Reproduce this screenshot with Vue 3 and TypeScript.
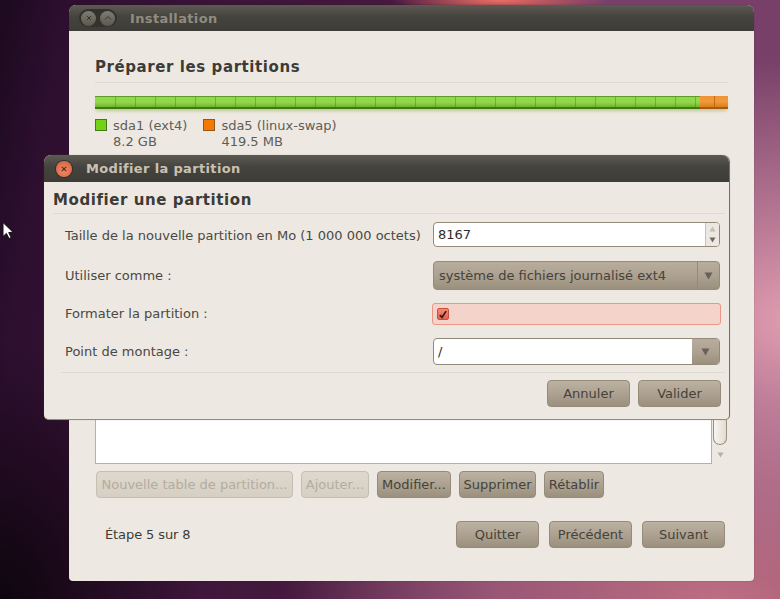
<script setup lang="ts">
const ticks: number[] = Array.from({ length: 31 }, (_, i) => i);
const treeButtons = [
  { label: 'Nouvelle table de partition...', width: 197, disabled: true },
  { label: 'Ajouter...', width: 68, disabled: true },
  { label: 'Modifier...', width: 74, disabled: false },
  { label: 'Supprimer', width: 77, disabled: false },
  { label: 'Rétablir', width: 60, disabled: false },
];
</script>

<template>
  <div class="desktop">
    <svg class="cursor" width="13" height="20" viewBox="0 0 13 20">
      <path d="M2 1.5 L2 15.5 L5.4 12.4 L8 17.6 L10.2 16.5 L7.7 11.6 L12 11.2 Z" fill="#fff" stroke="#111" stroke-width="1" />
    </svg>

    <section class="win install">
      <header class="titlebar">
        <div class="pill">
          <span class="pill-btn">
            <svg width="8" height="8" viewBox="0 0 8 8"><path d="M2 2 L6 6 M6 2 L2 6" stroke="#35342f" stroke-width="1" /></svg>
          </span>
          <span class="pill-btn">
            <svg width="8" height="8" viewBox="0 0 8 8"><path d="M1 5.5 L4 2.5 L7 5.5" stroke="#35342f" stroke-width="1" fill="none" /></svg>
          </span>
        </div>
        <span class="title dim">Installation</span>
      </header>

      <div class="install-body">
        <h1 class="heading">Préparer les partitions</h1>
        <div class="rule"></div>

        <div class="bar">
          <div class="bar-green">
            <i v-for="t in ticks" :key="t" class="tick"></i>
          </div>
          <div class="bar-orange"><i class="tick-o"></i></div>
        </div>

        <div class="legend">
          <div class="legend-item">
            <span class="swatch green"></span>
            <div class="legend-text"><div>sda1 (ext4)</div><div>8.2 GB</div></div>
          </div>
          <div class="legend-item">
            <span class="swatch orange"></span>
            <div class="legend-text"><div>sda5 (linux-swap)</div><div>419.5 MB</div></div>
          </div>
        </div>

        <div class="tree-row">
          <div class="tree"></div>
          <div class="scroll">
            <div class="thumb"></div>
            <svg class="scroll-arrow" width="7" height="6" viewBox="0 0 7 6"><path d="M0.5 0.5 L6.5 0.5 L3.5 5.5 Z" fill="#b5b0a5" /></svg>
          </div>
        </div>

        <div class="tree-buttons">
          <button
            v-for="b in treeButtons"
            :key="b.label"
            class="btn tight"
            :class="{ off: b.disabled }"
            :style="{ width: b.width + 'px' }"
          >{{ b.label }}</button>
        </div>

        <footer class="footer">
          <span class="step">Étape 5 sur 8</span>
          <div class="footer-buttons">
            <button class="btn wide">Quitter</button>
            <button class="btn wide">Précédent</button>
            <button class="btn wide">Suivant</button>
          </div>
        </footer>
      </div>
    </section>

    <section class="win dialog">
      <header class="titlebar dlg-bar">
        <span class="close">
          <svg width="8" height="8" viewBox="0 0 8 8"><path d="M1.8 1.8 L6.2 6.2 M6.2 1.8 L1.8 6.2" stroke="#5a2a1c" stroke-width="1.2" /></svg>
        </span>
        <span class="title">Modifier la partition</span>
      </header>

      <div class="dialog-body">
        <h2 class="heading small">Modifier une partition</h2>
        <div class="rule dlg-rule"></div>

        <div class="form">
          <label class="f-label">Taille de la nouvelle partition en Mo (1 000 000 octets)</label>
          <div class="spin">
            <span class="spin-value">8167</span>
            <span class="spin-btns">
              <svg width="7" height="6" viewBox="0 0 7 6"><path d="M3.5 0.5 L6.5 5.5 L0.5 5.5 Z" fill="#c4bfb3" /></svg>
              <svg width="7" height="6" viewBox="0 0 7 6"><path d="M0.5 0.5 L6.5 0.5 L3.5 5.5 Z" fill="#6f6a5f" /></svg>
            </span>
          </div>

          <label class="f-label">Utiliser comme :</label>
          <div class="combo">
            <span class="combo-value">système de fichiers journalisé ext4</span>
            <span class="combo-arrow">
              <svg width="9" height="8" viewBox="0 0 9 8"><path d="M0.5 0.5 L8.5 0.5 L4.5 7.5 Z" fill="#66615a" /></svg>
            </span>
          </div>

          <label class="f-label raised">Formater la partition :</label>
          <div class="check-row">
            <span class="check">
              <svg width="11" height="11" viewBox="0 0 11 11"><path d="M2 6 L4.4 8.6 L9 1.8" stroke="#2d1a16" stroke-width="1.8" fill="none" /></svg>
            </span>
          </div>

          <label class="f-label">Point de montage :</label>
          <div class="entry-combo">
            <span class="entry-value">/</span>
            <span class="entry-arrow">
              <svg width="9" height="8" viewBox="0 0 9 8"><path d="M0.5 0.5 L8.5 0.5 L4.5 7.5 Z" fill="#66615a" /></svg>
            </span>
          </div>
        </div>

        <div class="rule dlg-rule2"></div>
        <div class="dlg-actions">
          <button class="btn wide">Annuler</button>
          <button class="btn wide">Valider</button>
        </div>
      </div>
    </section>
  </div>
</template>

<style>
html, body { margin: 0; background: #fff; }
</style>

<style scoped>
.desktop {
  position: relative;
  width: 780px;
  height: 599px;
  overflow: hidden;
  font-family: "DejaVu Sans", sans-serif;
  font-size: 13px;
  color: #3c3b37;
  background:
    radial-gradient(ellipse 110px 14px at 500px 0, #ef6f62 0%, rgba(239, 111, 98, 0) 100%),
    radial-gradient(ellipse 300px 260px at 790px 320px, #e09cb0 0%, rgba(224, 156, 176, 0) 100%),
    radial-gradient(ellipse 440px 200px at 720px 600px, #bd6e82 0%, rgba(189, 110, 130, 0) 100%),
    radial-gradient(ellipse 200px 260px at 0 600px, #0e050e 0%, rgba(14, 5, 14, 0) 100%),
    linear-gradient(100deg, #1c0a1e 0%, #2e0f30 8%, #3a1438 25%, #45193f 45%, #76406a 68%, #7a4068 100%);
}

.cursor { position: absolute; left: 1px; top: 221px; }

.win {
  position: absolute;
  background: #ede9e2;
  box-sizing: border-box;
  display: flex;
  flex-direction: column;
}

.install {
  left: 69px;
  top: 5px;
  width: 685px;
  height: 576px;
  border-radius: 7px 7px 4px 4px;
  box-shadow: 0 0 1px rgba(0, 0, 0, 0.5);
}

.dialog {
  left: 44px;
  top: 155px;
  width: 686px;
  height: 265px;
  border-radius: 7px 7px 5px 5px;
  border-right: 1px solid #77705f;
  border-bottom: 1px solid #928b7b;
  box-shadow: 0 0 1px rgba(120, 110, 90, 0.6);
}

.titlebar {
  flex: none;
  height: 26px;
  display: flex;
  align-items: center;
  background: linear-gradient(#5c5a52 0%, #45433d 45%, #3e3c37 100%);
  border-radius: 7px 7px 0 0;
}

.dlg-bar { height: 27px; }

.pill {
  margin-left: 10px;
  width: 38px;
  height: 18px;
  border-radius: 9px;
  background: #33322d;
  display: flex;
  align-items: center;
  justify-content: space-around;
}

.pill-btn {
  width: 15px;
  height: 15px;
  border-radius: 50%;
  background: linear-gradient(#7f7c72, #5b5850);
  display: flex;
  align-items: center;
  justify-content: center;
}

.title {
  font-weight: 700;
  font-size: 13px;
  letter-spacing: 0.35px;
  color: #c9c2b4;
}

.title.dim { margin-left: 13px; color: #908c80; }

.close {
  margin-left: 12px;
  margin-right: 14px;
  width: 16px;
  height: 16px;
  border-radius: 50%;
  background: radial-gradient(circle at 50% 60%, #ee8a66, #d95c38);
  box-shadow: 0 0 0 1px #2f2e2a;
  display: flex;
  align-items: center;
  justify-content: center;
}

.install-body {
  flex: 1;
  min-height: 0;
  display: flex;
  flex-direction: column;
  padding: 26px 26px 33px;
}

.heading {
  margin: 0;
  font-size: 15px;
  line-height: 20px;
  font-weight: 700;
  letter-spacing: 0.58px;
  color: #3c3b37;
}

.rule { height: 1px; background: #e0dbd2; }
.install-body > .rule { margin-top: 5px; }

.bar {
  margin-top: 13px;
  height: 13px;
  display: flex;
  box-shadow: 0 3px 3px -1px rgba(110, 140, 40, 0.35);
}

.bar-green {
  width: 605px;
  overflow: hidden;
  display: flex;
  box-sizing: border-box;
  border-top: 1px solid #5f9a2c;
  border-bottom: 2px solid #3f7a10;
  background: linear-gradient(#8fd94a 0%, #93d84c 50%, #70b52e 100%);
}

.tick {
  flex: none;
  width: 20px;
  box-sizing: border-box;
  border-right: 1px solid rgba(70, 120, 30, 0.4);
}

.tick:first-child { margin-left: 1px; }

.bar-orange {
  width: 28px;
  display: flex;
  justify-content: flex-end;
  box-sizing: border-box;
  border-bottom: 2px solid #a85a10;
  background: linear-gradient(#ef9436 0%, #f09a3a 50%, #d9801f 100%);
}

.tick-o {
  width: 13px;
  border-left: 1px solid rgba(160, 80, 10, 0.6);
}

.legend {
  margin-top: 9px;
  display: flex;
  gap: 16px;
  height: 32px;
}

.legend-item { display: flex; gap: 6px; }

.swatch {
  flex: none;
  width: 12px;
  height: 12px;
  box-sizing: border-box;
  margin-top: 1px;
  border: 1px solid #4b4a40;
}

.swatch.green { background: #73d216; border-color: #44781a; }
.swatch.orange { background: #f57900; border-color: #8f5a20; }

.legend-text {
  line-height: 16px;
  color: #5f5d58;
}

.tree-row {
  flex: 1;
  min-height: 0;
  margin-top: 6px;
  display: flex;
}

.tree {
  flex: 1;
  background: #fff;
  border: 1px solid #b8b1a0;
}

.scroll {
  flex: none;
  width: 16px;
  position: relative;
}

.thumb {
  width: 14px;
  margin-left: 1px;
  height: calc(100% - 19px);
  box-sizing: border-box;
  border: 1px solid #98917f;
  border-top: 0;
  border-radius: 0 0 7px 7px;
  background: linear-gradient(90deg, #f7f5f0, #e2ddd3);
}

.scroll-arrow {
  position: absolute;
  left: 5px;
  bottom: 6px;
}

.tree-buttons {
  margin-top: 7px;
  margin-left: 1px;
  display: flex;
  gap: 8px;
}

.btn {
  flex: none;
  height: 27px;
  padding: 0;
  box-sizing: border-box;
  font-family: inherit;
  font-size: 13px;
  color: #45423b;
  border: 1px solid #948b79;
  border-radius: 4px;
  background: linear-gradient(#bcb2a2 0%, #ada291 50%, #9b907d 100%);
  white-space: nowrap;
}

.btn.wide { width: 83px; }

.btn.off {
  color: #b3aca0;
  border-color: #c5bfb2;
  background: linear-gradient(#ded8cd 0%, #d6cfc3 100%);
}

.footer {
  margin-top: 23px;
  height: 27px;
  flex: none;
  display: flex;
  align-items: center;
  justify-content: space-between;
  padding-left: 10px;
  padding-right: 3px;
}

.step { color: #3c3b37; letter-spacing: -0.1px; }

.footer-buttons { display: flex; gap: 10px; }

.dialog-body {
  flex: 1;
  display: flex;
  flex-direction: column;
  padding: 8px 8px 0 9px;
}

.dlg-rule { margin-top: 3px; margin-right: -4px; }

.form {
  margin-top: 8px;
  padding-left: 12px;
  display: grid;
  grid-template-columns: 368px 287px;
  row-gap: 13px;
  align-items: center;
}

.f-label { white-space: nowrap; color: #4a4843; }
.f-label.raised { margin-bottom: 2px; }

.spin {
  height: 25px;
  box-sizing: border-box;
  border: 1px solid #928b7a;
  border-radius: 4px;
  background: #fff;
  display: flex;
  align-items: stretch;
  margin-bottom: 1px;
}

.spin-value { flex: 1; padding-left: 4px; line-height: 23px; color: #2e2d2a; }

.spin-btns {
  width: 13px;
  background: #ece8e1;
  border-left: 1px solid #c9c3b6;
  border-radius: 0 3px 3px 0;
  display: flex;
  flex-direction: column;
  align-items: center;
  justify-content: space-around;
}

.combo {
  height: 29px;
  box-sizing: border-box;
  border: 1px solid #948b79;
  border-radius: 4px;
  background: linear-gradient(#b8ad9c 0%, #ada291 50%, #9b907d 100%);
  display: flex;
  align-items: center;
}

.combo-value { flex: 1; padding-left: 5px; color: #45423b; white-space: nowrap; }

.combo-arrow {
  width: 21px;
  height: 100%;
  border-left: 1px solid #948b79;
  display: flex;
  align-items: center;
  justify-content: center;
}

.check-row {
  height: 22px;
  box-sizing: border-box;
  margin: 0 -1px;
  border: 1px solid #ec9686;
  border-radius: 3px;
  background: #f3d3ca;
  display: flex;
  align-items: center;
  padding-left: 4px;
}

.check {
  width: 12px;
  height: 12px;
  box-sizing: border-box;
  border: 1px solid #c9503c;
  border-radius: 2px;
  background: linear-gradient(#f58878, #e8604c);
  display: flex;
  align-items: center;
  justify-content: center;
}

.entry-combo {
  height: 27px;
  box-sizing: border-box;
  border: 1px solid #928b7a;
  border-radius: 4px;
  background: #fff;
  display: flex;
  align-items: stretch;
  overflow: hidden;
}

.entry-value { flex: 1; padding-left: 4px; line-height: 25px; color: #2e2d2a; }

.entry-arrow {
  width: 27px;
  background: linear-gradient(#b8ad9c 0%, #ada291 50%, #9b907d 100%);
  display: flex;
  align-items: center;
  justify-content: center;
}

.dlg-rule2 { margin-top: 7px; margin-left: 8px; margin-right: -4px; }

.dlg-actions {
  margin-top: 7px;
  display: flex;
  justify-content: flex-end;
  gap: 8px;
}
</style>
